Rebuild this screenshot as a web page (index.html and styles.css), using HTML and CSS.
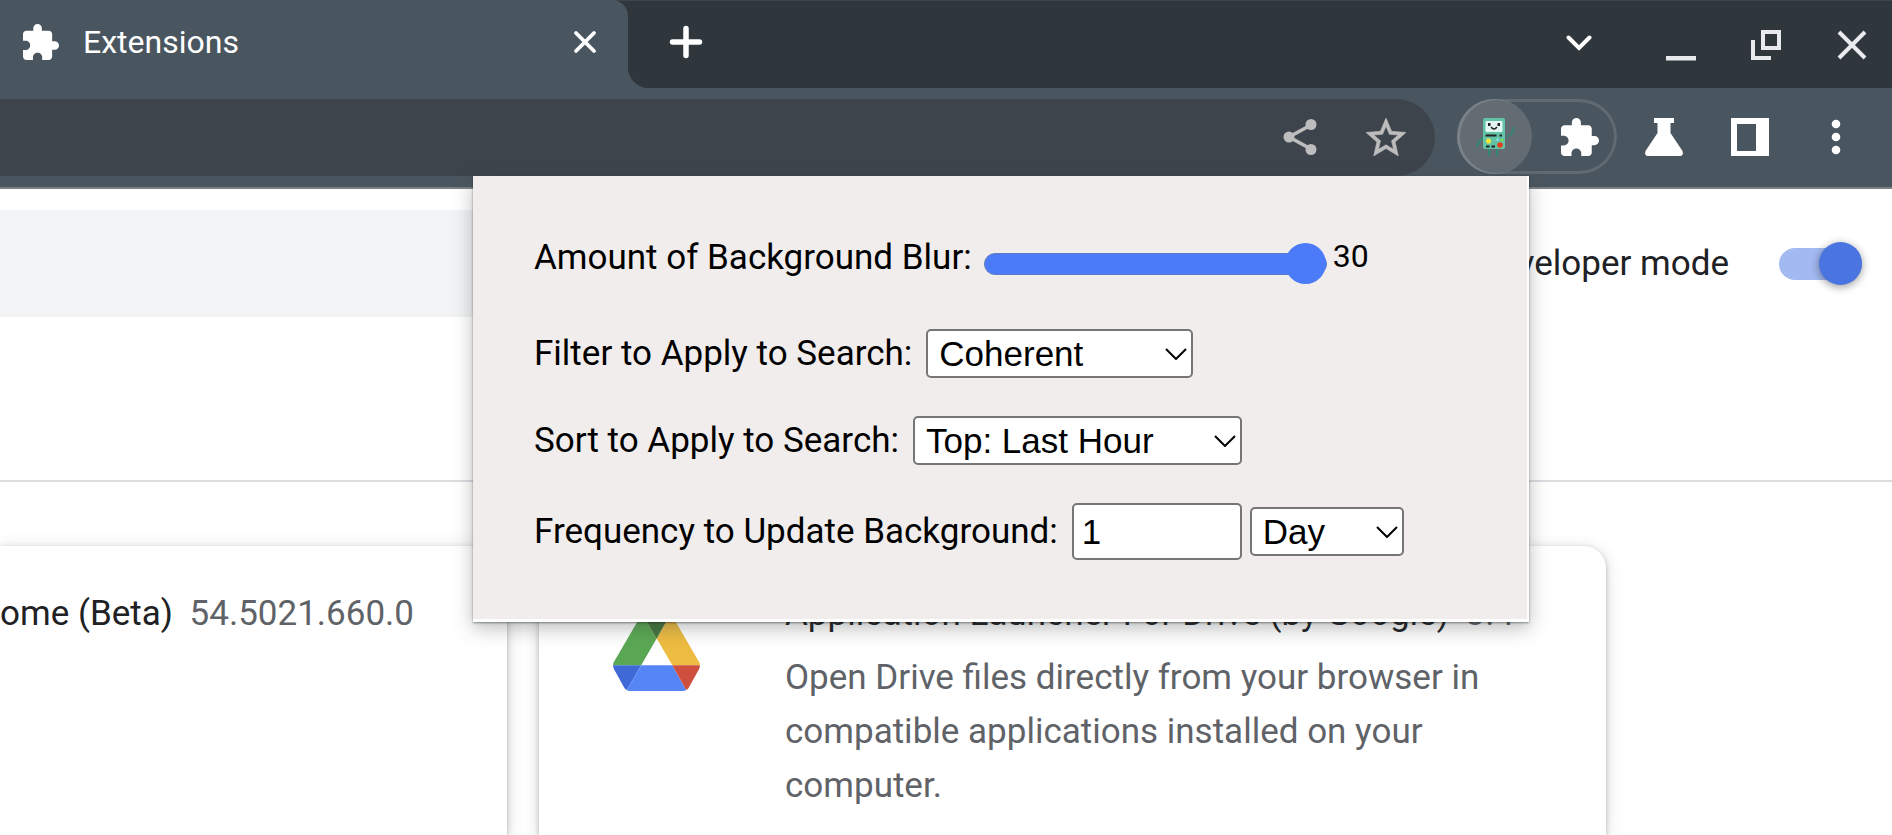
FILE: index.html
```html
<!DOCTYPE html>
<html lang="en">
<head>
<meta charset="utf-8">
<title>Extensions</title>
<link rel="stylesheet" href="styles.css">
</head>
<body>
<svg class="defs" aria-hidden="true">
  <symbol id="puzzle" viewBox="2 1 21 21"><path d="M20.5 11H19V7c0-1.1-.9-2-2-2h-4V3.5C13 2.12 11.88 1 10.5 1S8 2.12 8 3.5V5H4c-1.1 0-1.99.9-1.99 2v3.8H3.5c1.49 0 2.7 1.21 2.7 2.7s-1.21 2.7-2.7 2.7H2V20c0 1.1.9 2 2 2h3.8v-1.5c0-1.49 1.21-2.7 2.7-2.7s2.7 1.21 2.7 2.7V22H17c1.1 0 2-.9 2-2v-4h1.5c1.38 0 2.5-1.12 2.5-2.5S21.88 11 20.5 11z"/></symbol>
  <symbol id="chevron" viewBox="0 0 22 12"><path d="M1 1l10 10L21 1" fill="none" stroke="#000" stroke-width="2"/></symbol>
</svg>

<header class="browser">
  <div class="tabstrip">
    <div class="tab">
      <svg class="tab-icon" width="36" height="36"><use href="#puzzle"/></svg>
      <span class="tab-title">Extensions</span>
      <button class="icon-btn tab-close" aria-label="Close tab">
        <svg width="24" height="24" viewBox="0 0 24 24"><path d="M3 3l18 18M21 3L3 21" stroke="#fff" stroke-width="3.800" stroke-linecap="round"/></svg>
      </button>
    </div>
    <button class="icon-btn new-tab" aria-label="New tab">
      <svg width="34" height="34" viewBox="0 0 34 34"><path d="M17 3.500v27M3.500 17h27" stroke="#fff" stroke-width="5.500" stroke-linecap="round"/></svg>
    </button>
    <div class="window-controls">
      <button class="icon-btn search-tabs" aria-label="Search tabs">
        <svg width="28" height="16" viewBox="0 0 28 16"><path d="M3.500 2.500L14 13 24.500 2.500" fill="none" stroke="#fff" stroke-width="4" stroke-linecap="round"/></svg>
      </button>
      <button class="icon-btn" aria-label="Minimise">
        <svg width="32" height="32" viewBox="0 0 32 32"><path d="M2 27h30v4.500H2z" fill="#e8eaed"/></svg>
      </button>
      <button class="icon-btn" aria-label="Restore">
        <svg width="32" height="32" viewBox="0 0 32 32"><path d="M13 3h16v16H13zM3 11v18h18" fill="none" stroke="#e8eaed" stroke-width="4"/></svg>
      </button>
      <button class="icon-btn" aria-label="Close window">
        <svg width="32" height="32" viewBox="0 0 32 32"><path d="M3 3l26 26M29 3L3 29" stroke="#e8eaed" stroke-width="4"/></svg>
      </button>
    </div>
  </div>

  <div class="toolbar">
    <div class="omnibox">
      <button class="icon-btn" aria-label="Share">
        <svg width="34" height="38" viewBox="0 0 34 38"><path d="M28 7L6 19l22 12" fill="none" stroke="#bdbdbd" stroke-width="3.600"/><g fill="#bdbdbd"><circle cx="28" cy="6.500" r="5.500"/><circle cx="6" cy="19" r="5.500"/><circle cx="28" cy="31.500" r="5.500"/></g></svg>
      </button>
      <button class="icon-btn" aria-label="Bookmark this tab">
        <svg width="40" height="38" viewBox="2 2 20 19"><path fill="#bdbdbd" stroke="#bdbdbd" stroke-width=".3" d="M22 9.240l-7.190-.62L12 2 9.190 8.630 2 9.240l5.460 4.730L5.820 21 12 17.270 18.180 21l-1.630-7.030L22 9.240zM12 15.400l-3.760 2.270 1-4.280-3.320-2.880 4.380-.38L12 6.100l1.710 4.040 4.380.38-3.320 2.880 1 4.280L12 15.400z"/></svg>
      </button>
    </div>
    <div class="ext-pill">
      <button class="icon-btn ext-active" aria-label="Background extension">
        <svg width="40" height="40" viewBox="0 0 40 40">
          <path d="M10 20q-7 3-8 10M31 20q7-2 8-10M14 31v8M22 31v8" fill="none" stroke="#2f8a70" stroke-width="1.800"/>
          <rect x="8" y="1" width="22" height="31" rx="2" fill="#63c3a5"/>
          <rect x="10.500" y="4" width="17" height="11" rx="1" fill="#e3f6f1"/>
          <path d="M13 6h2.500v3H13zM22.500 6H25v3h-2.500z" fill="#222"/>
          <path d="M16 10q3 4 6 0" fill="none" stroke="#222" stroke-width="1.400"/>
          <path d="M10.500 17.500h11v2h-11zM24.500 17.500h2.500v2h-2.500zM11 28.500h3.500v2H11zM16.500 28.500H20v2h-3.500z" fill="#222"/>
          <path d="M12 21.500h3v5h-3zM11 22.500h5v3h-5z" fill="#f3e63a"/>
          <path d="M21 23.500l1.500-3 1.500 3z" fill="#8de8f0"/><circle cx="27" cy="23" r="1.300" fill="#7fe03b"/>
          <circle cx="25" cy="28" r="2.800" fill="#e2401f"/>
        </svg>
      </button>
      <button class="icon-btn ext-all" aria-label="Extensions">
        <svg width="38" height="38" fill="#fff"><use href="#puzzle"/></svg>
      </button>
    </div>
    <div class="toolbar-actions">
      <button class="icon-btn" aria-label="Experiments">
        <svg width="38" height="38" viewBox="0 0 38 38" fill="#fff"><path d="M9 0h20v5h-3.500v10l12 18q1.500 5-3 5h-31q-4.500 0-3-5l12-18V5H9z"/></svg>
      </button>
      <button class="icon-btn" aria-label="Side panel">
        <svg width="38" height="38" viewBox="0 0 38 38"><path fill="#fff" fill-rule="evenodd" d="M0 0h38v38H0zM6 6v27h19V6z"/></svg>
      </button>
      <button class="icon-btn" aria-label="Menu">
        <svg width="10" height="38" viewBox="0 0 10 38" fill="#fff"><circle cx="5" cy="6" r="4.300"/><circle cx="5" cy="19" r="4.300"/><circle cx="5" cy="32" r="4.300"/></svg>
      </button>
    </div>
  </div>
</header>

<main class="page">
  <div class="page-bar">
    <div class="search-box"></div>
    <label class="dev-mode">Developer mode
      <input class="toggle" type="checkbox" role="switch" checked>
    </label>
  </div>
  <div class="cards">
    <article class="card card-first">
      <h2 class="card-title">ome (Beta) <span class="version">54.5021.660.0</span></h2>
    </article>
    <article class="card card-drive">
      <svg class="drive-logo" width="87" height="79" viewBox="0 0 88 80">
        <path d="M29.500 1.500L44 27 28.500 54H0q0-2 1-3.500z" fill="#5aa853"/>
        <path d="M58.500 1.500L87 50.500q1 1.500 1 3.500H60L29.500 1.500 44 27z" fill="#edbc42"/>
        <path d="M29.500 1.500Q30.500 0 32 0h24q1.500 0 2.500 1.500L44 27z" fill="#42763c"/>
        <path d="M0 54h28.500L14 79q-1.500-.5-2.500-2L1 58q-1-2-1-4z" fill="#4069d8"/>
        <path d="M28.500 54H60l14 25q-1 1-3 1H17q-2 0-3-1z" fill="#5686f5"/>
        <path d="M60 54h28q0 2-1 4L76.500 77q-1 1.500-2.500 2z" fill="#cf4f3e"/>
      </svg>
      <div class="card-body">
        <h2 class="card-title">Application Launcher For Drive (by Google) <span class="version">3.4</span></h2>
        <p class="card-text">Open Drive files directly from your browser in compatible applications installed on your computer.</p>
      </div>
    </article>
  </div>
</main>

<form class="popup">
  <div class="row row-blur">
    <label for="blur">Amount of Background Blur:</label>
    <input class="slider" id="blur" type="range" min="0" max="30" value="30">
    <output class="slider-value" for="blur">30</output>
  </div>
  <div class="row">
    <label for="filter">Filter to Apply to Search:</label>
    <span class="select-wrap">
      <select class="select select-filter" id="filter"><option>Coherent</option></select>
      <svg class="select-arrow" width="22" height="12"><use href="#chevron"/></svg>
    </span>
  </div>
  <div class="row">
    <label for="sort">Sort to Apply to Search:</label>
    <span class="select-wrap">
      <select class="select select-sort" id="sort"><option>Top: Last Hour</option></select>
      <svg class="select-arrow" width="22" height="12"><use href="#chevron"/></svg>
    </span>
  </div>
  <div class="row">
    <label for="frequency">Frequency to Update Background:</label>
    <input class="number" id="frequency" type="text" inputmode="numeric" value="1">
    <span class="select-wrap">
      <select class="select select-unit" aria-label="Frequency unit"><option>Day</option></select>
      <svg class="select-arrow" width="22" height="12"><use href="#chevron"/></svg>
    </span>
  </div>
</form>
</body>
</html>
```

FILE: styles.css
```css
* { box-sizing: border-box; }

body {
  margin: 0;
  height: 100vh;
  position: relative;
  display: flex;
  flex-direction: column;
  overflow: hidden;
  background: #fff;
  color: #202124;
  font-family: Roboto, sans-serif;
  font-size: 35px;
}

.defs { display: none; }

.icon-btn {
  display: flex;
  align-items: center;
  justify-content: center;
  padding: 0;
  border: 0;
  background: none;
}

/* Tab strip */
.browser { background: #4a565f; border-bottom: 2px solid #7b8084; }

.tabstrip {
  display: flex;
  height: 88px;
  background: #2f363c;
  box-shadow: inset 0 1px #3c454c;
}

.tab {
  position: relative;
  display: flex;
  align-items: center;
  width: 628px;
  padding: 0 31px 4px 23px;
  background: #4a565f;
  border-radius: 0 16px 0 0;
}

.tab::after {
  content: "";
  position: absolute;
  left: 100%;
  bottom: 0;
  width: 22px;
  height: 22px;
  background: radial-gradient(circle at 100% 0, transparent 22px, #4a565f 23px);
}

.tab-icon { fill: #fff; }
.tab-title { flex: 1; margin-left: 24px; color: #fff; font-size: 32px; }
.new-tab { width: 116px; padding-bottom: 4px; }
.window-controls { display: flex; gap: 6px; margin-left: auto; }
.window-controls .icon-btn { width: 80px; padding-top: 2px; }
.window-controls .search-tabs { margin-right: 15px; padding: 0 0 2px; }

/* Toolbar */
.toolbar {
  display: flex;
  align-items: flex-start;
  padding: 11px 13px 11px 0;
}

.toolbar .icon-btn { height: 75px; }

.omnibox {
  display: flex;
  flex: 1;
  justify-content: flex-end;
  height: 77px;
  padding-right: 6px;
  margin-right: 22px;
  border-radius: 0 39px 39px 0;
  background: #3d444b;
}

.omnibox .icon-btn { width: 86px; }

.ext-pill {
  display: flex;
  width: 160px;
  border-radius: 38px;
  box-shadow: inset 0 0 0 3px #5f6a72;
}

.ext-active {
  width: 75px;
  border-radius: 50%;
  background: #636c73;
  box-shadow: inset 2px 0 0 1px #7a8288;
}

.ext-all { flex: 1; padding-left: 10px; }
.toolbar-actions { display: flex; margin-left: 4px; }
.toolbar-actions .icon-btn { width: 86px; }

/* Extensions page */
.page { display: flex; flex: 1; flex-direction: column; }

.page-bar {
  display: flex;
  align-items: center;
  justify-content: space-between;
  padding: 21px 30px 163px 0;
  border-bottom: 2px solid #dadce0;
}

.search-box { width: 40%; height: 107px; background: #f1f3f4; }
.dev-mode { display: flex; align-items: center; gap: 50px; }

.toggle {
  appearance: none;
  display: flex;
  align-items: center;
  justify-content: flex-end;
  width: 83px;
  height: 32px;
  margin: 0;
  border-radius: 16px;
  background: #a3b9f1;
}

.toggle::before {
  content: "";
  width: 43px;
  height: 43px;
  border-radius: 50%;
  background: #4a74e0;
  box-shadow: 0 2px 8px rgba(0, 0, 0, 0.4);
}

.cards {
  display: grid;
  flex: 1;
  grid-template-columns: 507px 1067px;
  gap: 32px;
  padding-top: 64px;
}

.card {
  padding-top: 41px;
  border-radius: 22px 22px 0 0;
  background: #fff;
  box-shadow: 0 2px 5px rgba(60, 64, 67, 0.3), 0 3px 16px rgba(60, 64, 67, 0.2);
}

.card-first { border-radius: 0; }
.card-drive { display: flex; align-items: flex-start; gap: 85px; padding-left: 74px; padding-right: 110px; }
.drive-logo { flex: none; margin-top: 25px; }
.card-title { margin: 0 0 10px; font-size: 35px; font-weight: 400; line-height: 54px; white-space: nowrap; }
.version { margin-left: 8px; color: #5f6368; }
.card-text { margin: 0; color: #5f6368; line-height: 54px; }

/* Extension popup */
.popup {
  position: absolute;
  top: 176px;
  right: 363px;
  width: 1056px;
  display: flex;
  flex-direction: column;
  gap: 38px;
  padding: 57px 59px 59px 61px;
  border: solid #fff;
  border-width: 0 2px 3px 0;
  background: #f1edec;
  color: #000;
  box-shadow: 0 1px 2px rgba(0, 0, 0, 0.4), 0 6px 18px rgba(60, 64, 67, 0.35);
}

.row { display: flex; align-items: center; gap: 8px; }
.row label { margin-right: 6px; }
.row-blur { gap: 6px; height: 49px; margin-bottom: 9px; }

.slider {
  appearance: none;
  width: 343px;
  height: 41px;
  margin: 13px 0 0;
  background: none;
}

.slider::-webkit-slider-runnable-track {
  height: 22px;
  border: 1px solid #5c7cc0;
  border-radius: 11px;
  background: #4b7bf9;
}

.slider::-webkit-slider-thumb {
  appearance: none;
  width: 41px;
  height: 41px;
  margin-top: -11px;
  border-radius: 50%;
  background: #4b7bf9;
}

.slider-value { padding-bottom: 4px; font-size: 32px; }

.select-wrap { position: relative; display: flex; align-items: center; }

.select, .number {
  border: 2px solid #767676;
  border-radius: 5px;
  background: #fff;
  color: #000;
  font-family: "Liberation Sans", Arial, sans-serif;
  font-size: 35px;
}

.select { appearance: none; height: 49px; padding: 0 11px; }
.select-arrow { position: absolute; right: 6px; }
.select-filter { width: 267px; }
.select-sort { width: 329px; }
.select-unit { width: 154px; }
.number { width: 170px; height: 57px; padding: 0 8px; }
```
